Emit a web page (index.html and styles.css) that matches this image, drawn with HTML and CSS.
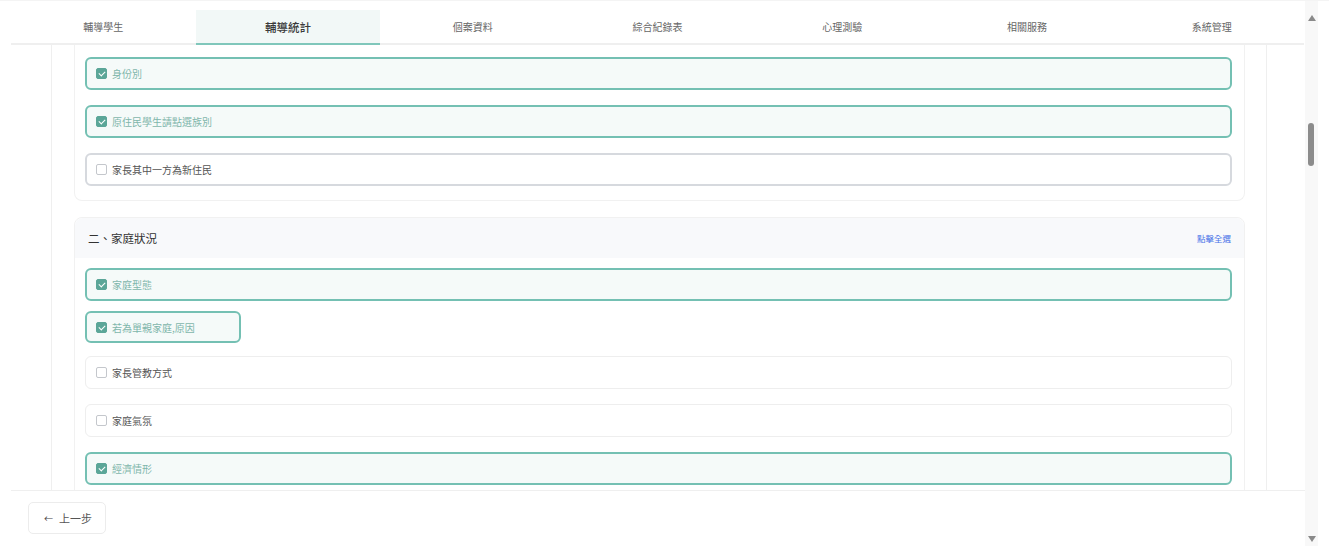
FILE: index.html
```html
<!DOCTYPE html>
<html>
<head>
  <title>輔導統計</title>
  <link rel="stylesheet" href="styles.css">
</head>
<body>
<div class="page">
  <div class="app">
    <div class="tabs">
      <div class="tab">輔導學生</div>
      <div class="tab active">輔導統計</div>
      <div class="tab">個案資料</div>
      <div class="tab">綜合紀錄表</div>
      <div class="tab">心理測驗</div>
      <div class="tab">相關服務</div>
      <div class="tab">系統管理</div>
    </div>

    <div class="content">
      <div class="content-inner">
        <div class="card cut">
          <div class="card-body">
            <label class="item checked"><span class="box"></span>身份別</label>
            <label class="item checked"><span class="box"></span>原住民學生請點選族別</label>
            <label class="item hover last"><span class="box"></span>家長其中一方為新住民</label>
          </div>
        </div>

        <div class="card">
          <div class="card-head">
            <span class="card-title">二、家庭狀況</span>
            <a class="select-all">點擊全選</a>
          </div>
          <div class="card-body">
            <label class="item checked tight"><span class="box"></span>家庭型態</label>
            <label class="item checked narrow"><span class="box"></span>若為單親家庭,原因</label>
            <label class="item"><span class="box"></span>家長管教方式</label>
            <label class="item"><span class="box"></span>家庭氣氛</label>
            <label class="item checked"><span class="box"></span>經濟情形</label>
            <label class="item"><span class="box"></span>家庭成員</label>
          </div>
        </div>
      </div>
    </div>

    <div class="footer">
      <button class="btn-back"><span class="arrow">&#8592;</span><span>上一步</span></button>
    </div>
  </div>

  <div class="scrollbar">
    <div class="sb-up"></div>
    <div class="sb-track"><div class="sb-thumb"></div></div>
    <div class="sb-down"></div>
  </div>
</div>
</body>
</html>
```

FILE: styles.css
```css
body { margin: 0; background: #fff; font-family: "Noto Sans CJK TC", "Noto Sans", sans-serif; color: #555; overflow: hidden; }
.page { display: flex; width: 1329px; height: 556px; border-top: 1px solid #f4f4f4; box-sizing: border-box; }
.app { width: 1305px; display: flex; flex-direction: column; }

.tabs { display: flex; margin: 0 1px 0 11px; padding-top: 9px; border-bottom: 2px solid #efefef; }
.tab { flex: 1; height: 33px; display: flex; align-items: center; justify-content: center; font-size: 10px; color: #666; }
.tab.active { background: #f2f8f7; border-bottom: 2px solid #80c7bb; margin-bottom: -2px; font-size: 11.5px; font-weight: 500; color: #3a3a3a; }

.content { flex: 1; overflow: hidden; margin: 0 1px 0 11px; }
.content-inner { margin: 0 37px 0 40px; height: 100%; border-left: 1px solid #efefef; border-right: 1px solid #efefef; padding: 0 21px 0 22px; }

.card { border: 1px solid #f1f1f1; border-radius: 8px; margin-bottom: 16px; }
.card.cut { border-top: none; border-radius: 0 0 8px 8px; }
.card-head { height: 40px; background: #f8f9fb; border-radius: 8px 8px 0 0; display: flex; align-items: center; justify-content: space-between; padding: 0 13px 0 13px; }
.card-title { font-size: 11.5px; color: #333; font-weight: 400; }
.select-all { font-size: 8.5px; color: #4a74e8; cursor: pointer; }
.card-body { padding: 10px 12px 14px 10px; }
.card.cut .card-body { padding-top: 12px; }

.item { display: flex; align-items: center; height: 33px; box-sizing: border-box; border: 1px solid #eeeeee; border-radius: 6px; padding-left: 10px; margin-bottom: 15px; font-size: 10px; color: #555; }
.item.last { margin-bottom: 0; }
.item.hover { border: 2px solid #d6d9de; padding-left: 9px; }
.item.checked { border: 2px solid #74c0b3; background: #f5faf9; padding-left: 9px; color: #7fb6ab; }
.item.tight { margin-bottom: 10px; }
.item.narrow { width: 156px; height: 32px; margin-bottom: 13px; }

.box { width: 11px; height: 11px; box-sizing: border-box; border: 1px solid #c4c7cc; border-radius: 2px; background: #fff; margin-right: 5px; position: relative; flex: none; }
.item.checked .box { background: #5ba698; border-color: #5ba698; }
.item.checked .box::after { content: ""; position: absolute; left: 3px; top: 1px; width: 3px; height: 5px; border: solid #fff; border-width: 0 1.5px 1.5px 0; transform: rotate(45deg); }

.footer { height: 66px; flex: none; margin-left: 11px; border-top: 1px solid #efefef; padding: 11px 0 0 17px; box-sizing: border-box; }
.btn-back { height: 32px; background: #fff; border: 1px solid #ececec; border-radius: 5px; font-family: inherit; font-size: 11px; color: #555; display: flex; align-items: center; gap: 6px; padding: 0 13px 0 15px; }
.arrow { font-size: 9px; color: #444; }

.scrollbar { width: 13px; height: 545px; background: #f8f8f8; display: flex; flex-direction: column; align-items: center; }
.sb-up { margin-top: 14px; width: 0; height: 0; border-left: 4px solid transparent; border-right: 4px solid transparent; border-bottom: 6px solid #8a8a8a; }
.sb-track { flex: 1; width: 100%; position: relative; }
.sb-thumb { position: absolute; left: 3px; top: 102px; width: 6px; height: 43px; border-radius: 3px; background: #8c8c8c; }
.sb-down { margin-bottom: 4px; width: 0; height: 0; border-left: 4px solid transparent; border-right: 4px solid transparent; border-top: 6px solid #8a8a8a; }
```
